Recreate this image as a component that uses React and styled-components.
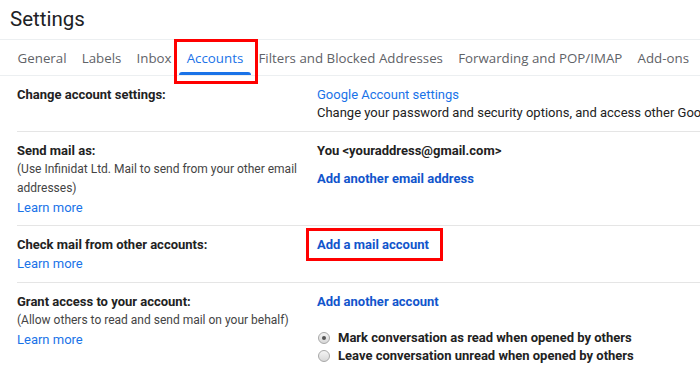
import styled, { createGlobalStyle } from "styled-components";

const GlobalStyle = createGlobalStyle`
  body {
    margin: 0;
    background: #fff;
    font-family: Roboto, "Liberation Sans", Arial, sans-serif;
    color: #222;
  }
`;

const Page = styled.div`
  width: 700px;
  height: 373px;
  overflow: hidden;
`;

const Title = styled.h1`
  margin: 0;
  height: 39px;
  padding-left: 10px;
  display: flex;
  align-items: center;
  font-family: Roboto, "Liberation Sans", sans-serif;
  font-weight: 400;
  font-size: 20.5px;
  color: #202124;
  box-sizing: border-box;
  padding-bottom: 1px;
`;

const TabBar = styled.div`
  display: flex;
  height: 35px;
  padding-left: 10px;
  border-top: 1px solid #eceff1;
  border-bottom: 1px solid #eceff1;
`;

const Tab = styled.div`
  position: relative;
  display: flex;
  align-items: center;
  padding: 0 7.6px;
  font-family: "Open Sans", Roboto, sans-serif;
  font-size: 13.3px;
  font-weight: 500;
  white-space: nowrap;
  color: ${(p) => (p.$active ? "#1a73e8" : "#5f6368")};

  ${(p) =>
    p.$active &&
    `
    &::before {
      content: "";
      position: absolute;
      left: 0;
      right: 0;
      bottom: 0;
      height: 3px;
      border-radius: 3px 3px 0 0;
      background: #1a73e8;
    }
  `}
`;

const Highlight = styled.span`
  position: absolute;
  border: 3px solid #f00;
  pointer-events: none;
`;

const TabHighlight = styled(Highlight)`
  left: -5px;
  right: -7px;
  top: -1px;
  bottom: -9px;
`;

const Table = styled.div`
  margin-left: 17px;
`;

const Row = styled.div`
  display: grid;
  grid-template-columns: 300px 1fr;
  padding: 9px 0 8.5px;
  border-bottom: ${(p) => (p.$last ? "none" : "1px solid #e5e5e5")};
  line-height: 19px;
`;

const Label = styled.div`
  font-size: 13px;
  font-weight: 700;
  color: #222;
`;

const Note = styled.div`
  font-size: 12px;
  color: #444;
  padding-right: 10px;
`;

const Link = styled.a`
  display: block;
  font-size: 13px;
  color: #1a73e8;
  text-decoration: none;
  cursor: pointer;
`;

const StrongLink = styled.a`
  position: relative;
  display: inline-block;
  font-size: 13px;
  font-weight: 700;
  color: #1155cc;
  text-decoration: none;
  cursor: pointer;
  margin-top: ${(p) => p.$mt || "0"};
`;

const LinkHighlight = styled(Highlight)`
  left: -11px;
  right: -14px;
  top: -7px;
  bottom: -7px;
`;

const Value = styled.div`
  display: flex;
  flex-direction: column;
  align-items: flex-start;
  white-space: nowrap;
  min-width: 0;
`;

const Text = styled.div`
  font-size: 13px;
  color: #222;
  font-weight: ${(p) => (p.$bold ? 700 : 400)};
  line-height: ${(p) => p.$lh || "19px"};
`;

const Options = styled.div`
  margin-top: 18px;
  padding-left: 1px;
  display: flex;
  flex-direction: column;
`;

const Option = styled.label`
  display: flex;
  align-items: center;
  gap: 8px;
  height: 18px;
  font-size: 13px;
  font-weight: 700;
  color: #222;
`;

const Radio = styled.span`
  width: 10px;
  height: 10px;
  border-radius: 50%;
  border: 1px solid #a8a8a8;
  background: linear-gradient(#f4f4f4, #d8d8d8);
  display: flex;
  align-items: center;
  justify-content: center;
  flex-shrink: 0;

  &::after {
    content: "";
    width: 4px;
    height: 4px;
    border-radius: 50%;
    background: ${(p) => (p.$checked ? "#555" : "transparent")};
  }
`;

const tabs = [
  "General",
  "Labels",
  "Inbox",
  "Accounts",
  "Filters and Blocked Addresses",
  "Forwarding and POP/IMAP",
  "Add-ons",
];

export default function App() {
  return (
    <Page>
      <GlobalStyle />
      <Title>Settings</Title>
      <TabBar>
        {tabs.map((t) => (
          <Tab key={t} $active={t === "Accounts"}>
            {t}
            {t === "Accounts" && <TabHighlight />}
          </Tab>
        ))}
      </TabBar>
      <Table>
        <Row>
          <Label>Change account settings:</Label>
          <Value>
            <Link>Google Account settings</Link>
            <Text $lh="18px">
              Change your password and security options, and access other Google
              services.
            </Text>
          </Value>
        </Row>
        <Row>
          <div>
            <Label>Send mail as:</Label>
            <Note>
              (Use Infinidat Ltd. Mail to send from your other email addresses)
            </Note>
            <Link>Learn more</Link>
          </div>
          <Value>
            <Text $bold>You &lt;youraddress@gmail.com&gt;</Text>
            <StrongLink $mt="9px">Add another email address</StrongLink>
          </Value>
        </Row>
        <Row>
          <div>
            <Label>Check mail from other accounts:</Label>
            <Link>Learn more</Link>
          </div>
          <Value>
            <StrongLink>
              Add a mail account
              <LinkHighlight />
            </StrongLink>
          </Value>
        </Row>
        <Row $last>
          <div>
            <Label>Grant access to your account:</Label>
            <Note>(Allow others to read and send mail on your behalf)</Note>
            <Link>Learn more</Link>
          </div>
          <Value>
            <StrongLink>Add another account</StrongLink>
            <Options>
              <Option>
                <Radio $checked />
                Mark conversation as read when opened by others
              </Option>
              <Option>
                <Radio />
                Leave conversation unread when opened by others
              </Option>
            </Options>
          </Value>
        </Row>
      </Table>
    </Page>
  );
}
